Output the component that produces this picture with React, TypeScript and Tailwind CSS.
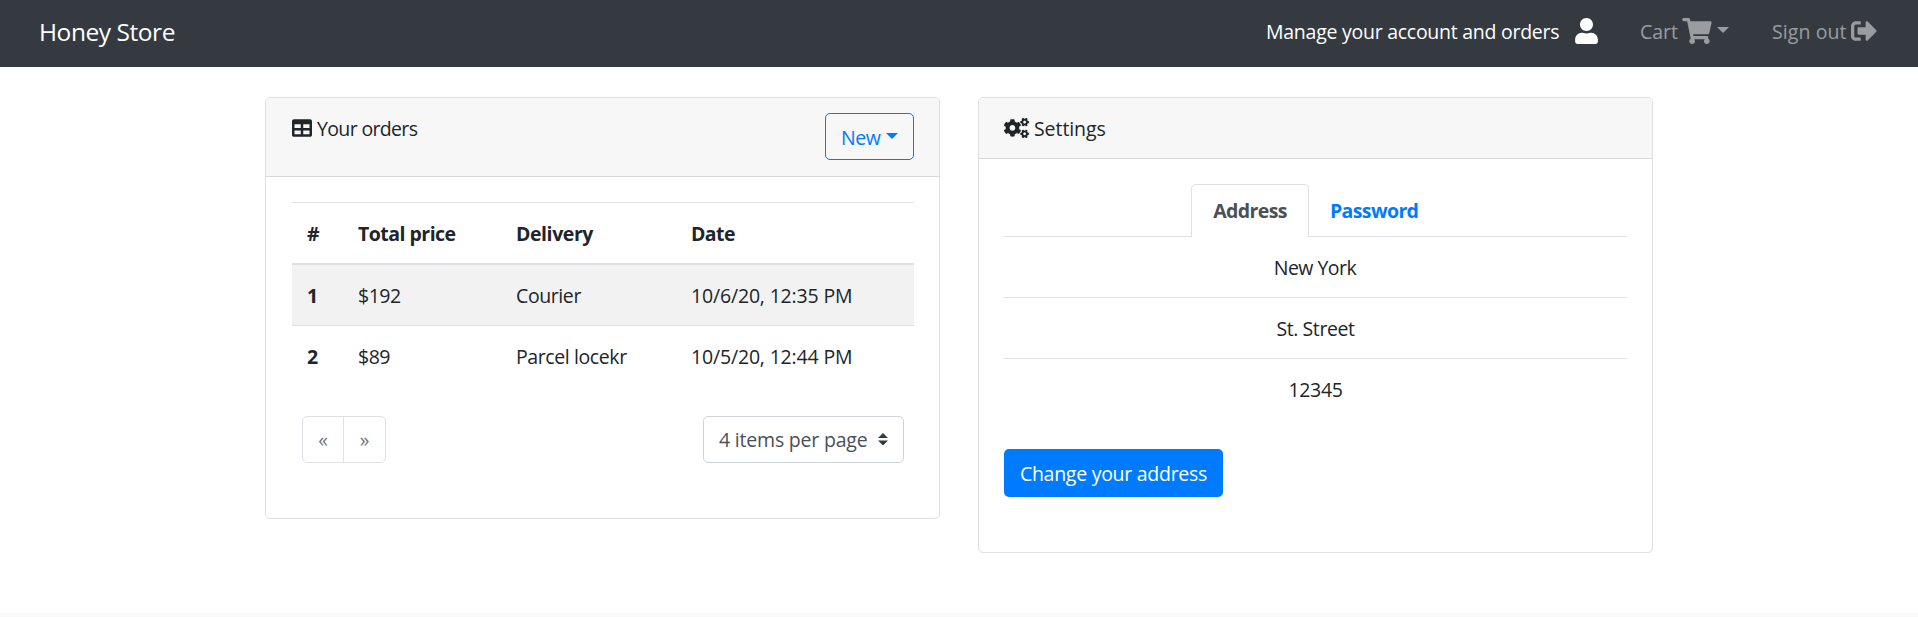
import React from 'react';
import { FaCogs, FaShoppingCart, FaSignOutAlt, FaTable, FaUser } from 'react-icons/fa';

type Order = { id: number; price: string; delivery: string; date: string };

const orders: Order[] = [
  { id: 1, price: '$192', delivery: 'Courier', date: '10/6/20, 12:35 PM' },
  { id: 2, price: '$89', delivery: 'Parcel locekr', date: '10/5/20, 12:44 PM' },
];

function Caret({ className }: { className: string }) {
  return (
    <span
      className={`h-0 w-0 border-x-[6px] border-t-[6px] border-x-transparent border-t-current ${className}`}
    />
  );
}

function Navbar() {
  return (
    <nav className="flex h-[67px] items-center bg-[#343a40] pl-[39px] text-white">
      <a className="pb-[5px] text-[24.5px] leading-[37px] tracking-[-0.45px]">Honey Store</a>
      <a className="ml-auto flex items-center">
        <span className="w-[309px] pb-[4px] tracking-[-0.26px]">Manage your account and orders</span>
        <FaUser className="mt-[-5px] h-[26px] w-[23px]" />
      </a>
      <a className="ml-[42px] flex items-center text-white/50">
        <span className="w-[42px] pb-[4px]">Cart</span>
        <FaShoppingCart className="mt-[-5px] h-[26px] w-[30px]" />
        <Caret className="mt-[-7px] ml-[5px]" />
      </a>
      <a className="mr-[41px] ml-[43px] flex items-center text-white/50">
        <span className="w-[79px] pb-[4px] tracking-[0.1px]">Sign out</span>
        <FaSignOutAlt className="mt-[-5px] h-[26px] w-[26px]" />
      </a>
    </nav>
  );
}

function OrdersCard() {
  return (
    <section className="h-[422px] w-[675px] rounded-[5px] border border-[#dfdfdf] bg-white">
      <header className="flex h-[79px] justify-between rounded-t-[4px] border-b border-[#d8d8d8] bg-[#f7f7f7] pt-[15px] pr-[25px] pl-[26px]">
        <div className="flex h-[30px] items-center">
          <FaTable className="h-5 w-5" />
          <span className="ml-[5px] pt-px tracking-[-0.65px]">Your orders</span>
        </div>
        <button className="flex h-[47px] w-[89px] items-center rounded-[5px] border border-[#007bff] pl-[15px] text-left text-[#007bff]">
          <span className="w-[45px] pt-[3px] tracking-[-0.4px]">New</span>
          <Caret className="mt-[-2px]" />
        </button>
      </header>
      <div className="pt-[25px] pr-[25px] pl-[26px]">
        <table className="w-full table-fixed border-collapse text-left">
          <colgroup>
            <col className="w-[51px]" />
            <col className="w-[158px]" />
            <col className="w-[175px]" />
            <col />
          </colgroup>
          <thead>
            <tr className="h-[61px] border-t border-b-2 border-t-[#dee2e6] border-b-[#dee2e6] font-bold">
              <th className="pt-0.5 pl-[15px]">#</th>
              <th className="pt-0.5 pl-[15px] tracking-[-0.52px]">Total price</th>
              <th className="pt-0.5 pl-[15px] tracking-[-0.43px]">Delivery</th>
              <th className="pt-0.5 pl-[15px] tracking-[-0.6px]">Date</th>
            </tr>
          </thead>
          <tbody>
            {orders.map((o) => (
              <tr
                key={o.id}
                className="h-[61px] border-t border-[#dee2e6] first:h-[62px] odd:bg-[#f2f2f2] first:[&>*]:pt-[3px]"
              >
                <th className="pt-px pl-[15px] font-bold">{o.id}</th>
                <td className="pt-px pl-[15px] tracking-[-0.5px]">{o.price}</td>
                <td className="pt-px pl-[15px] tracking-[-0.4px]">{o.delivery}</td>
                <td className="pt-px pl-[15px] tracking-[-0.17px]">{o.date}</td>
              </tr>
            ))}
          </tbody>
        </table>
        <div className="mt-[29px] flex justify-between px-[10px]">
          <div className="flex h-[47px] w-[84px] rounded-[5px] border border-[#dee2e6] text-[#6c757d]">
            <button className="w-[41px] border-r border-[#dee2e6] pt-0.5">«</button>
            <button className="w-[41px] pt-0.5">»</button>
          </div>
          <button className="flex h-[47px] w-[201px] items-center justify-between rounded-[5px] border border-[#ced4da] px-[15px] text-[#495057]">
            <span className="pt-px tracking-[-0.2px]">4 items per page</span>
            <svg viewBox="0 0 4 5" className="h-[12.5px] w-[10px] fill-[#343a40]">
              <path d="M2 0L0 2h4zm0 5L0 3h4z" />
            </svg>
          </button>
        </div>
      </div>
    </section>
  );
}

function SettingsCard() {
  return (
    <section className="h-[456px] w-[675px] rounded-[5px] border border-[#dfdfdf] bg-white">
      <header className="flex h-[61px] items-center rounded-t-[4px] border-b border-[#d8d8d8] bg-[#f7f7f7] px-[25px]">
        <FaCogs className="h-5 w-[25px]" />
        <span className="ml-[5px] pt-0.5 tracking-[-0.07px]">Settings</span>
      </header>
      <div className="px-[25px] pt-[25px]">
        <div className="flex h-[53px] font-bold">
          <div className="w-[187px] border-b border-[#dee2e6]" />
          <div className="w-[118px] rounded-t-[5px] border border-b-0 border-[#dee2e6] pt-[11px] text-center tracking-[-0.6px] text-[#495057]">
            Address
          </div>
          <div className="flex-1 border-b border-[#dee2e6] pt-3 pl-[21px] tracking-[-0.63px] text-[#007bff]">
            Password
          </div>
        </div>
        <div className="h-[61px] border-b border-[#dee2e6] pt-4 pr-px text-center tracking-[-0.53px]">New York</div>
        <div className="h-[61px] border-b border-[#dee2e6] pt-4 text-center tracking-[-0.41px]">St. Street</div>
        <div className="h-[61px] pt-4 text-center tracking-[-0.33px]">12345</div>
        <button className="mt-[29px] flex h-12 w-[219px] items-center justify-center rounded-[5px] bg-[#007bff] pt-px tracking-[-0.27px] text-white">
          Change your address
        </button>
      </div>
    </section>
  );
}

export default function App() {
  return (
    <div className="flex h-[617px] flex-col overflow-hidden bg-white font-['Open_Sans','Noto_Sans',sans-serif] text-[19.5px] leading-[30px] whitespace-nowrap text-[#212529]">
      <Navbar />
      <main className="flex flex-1 items-start gap-[38px] pt-[30px] pl-[265px]">
        <OrdersCard />
        <SettingsCard />
      </main>
      <footer className="h-[4px] bg-[#f8f9fa]" />
    </div>
  );
}
